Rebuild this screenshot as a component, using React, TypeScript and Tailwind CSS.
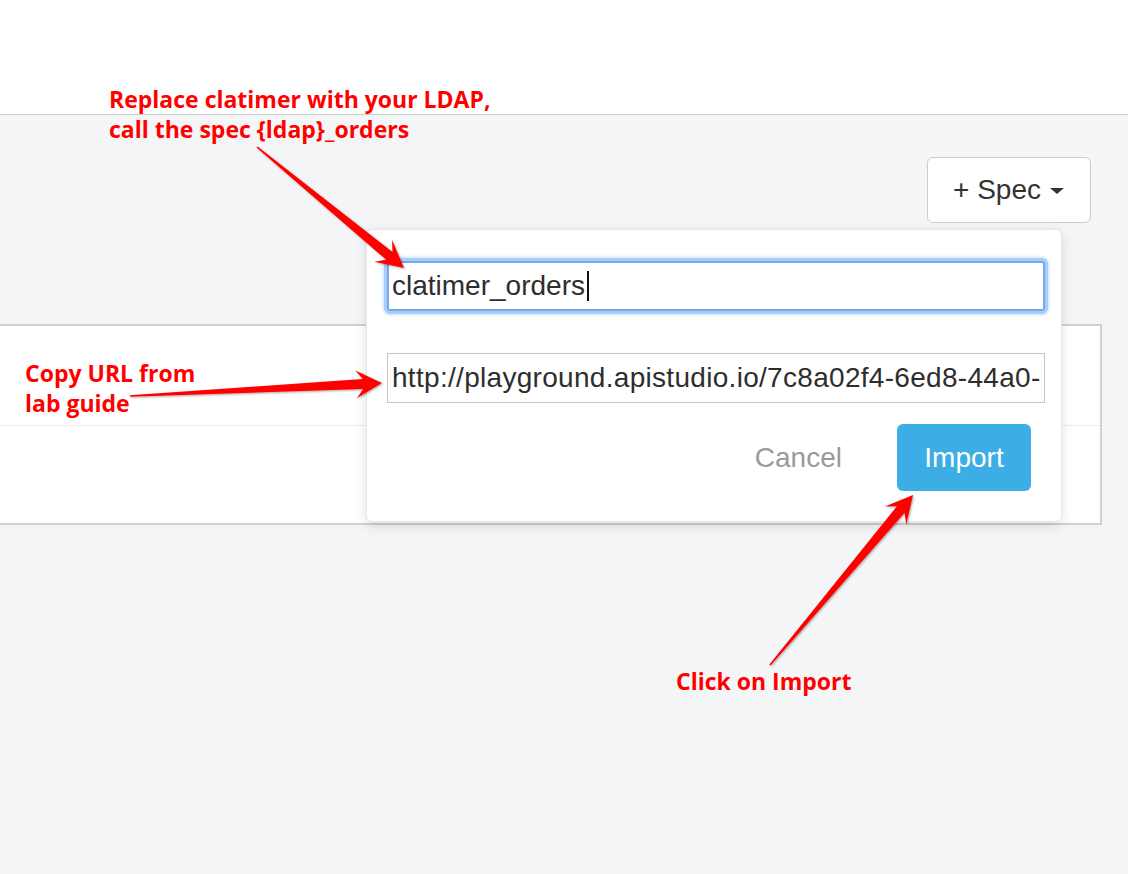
import React from "react";

type Pt = [number, number];

function arrowPoints(
  tail: Pt,
  tip: Pt,
  headLen = 26,
  headHalf = 14,
  shaftHalf = 5,
  tailHalf = 0.8,
  barb = 7
): string {
  const [tx, ty] = tail;
  const [hx, hy] = tip;
  const dx = hx - tx;
  const dy = hy - ty;
  const L = Math.sqrt(dx * dx + dy * dy);
  const ux = dx / L;
  const uy = dy / L;
  const nx = -uy;
  const ny = ux;
  const P = (t: number, s: number) =>
    `${(tx + ux * t + nx * s).toFixed(1)},${(ty + uy * t + ny * s).toFixed(1)}`;
  return [
    P(0, tailHalf),
    P(L - headLen + barb, shaftHalf),
    P(L - headLen, headHalf),
    P(L, 0),
    P(L - headLen, -headHalf),
    P(L - headLen + barb, -shaftHalf),
    P(0, -tailHalf),
  ].join(" ");
}

function Arrows() {
  return (
    <svg
      className="absolute inset-0 pointer-events-none"
      width={1128}
      height={874}
      viewBox="0 0 1128 874"
    >
      <defs>
        <filter id="ash" x="-10%" y="-10%" width="120%" height="120%">
          <feDropShadow dx="1" dy="1" stdDeviation="0.8" floodColor="#000" floodOpacity="0.35" />
        </filter>
      </defs>
      <g fill="#ff0000" filter="url(#ash)">
        <polygon points={arrowPoints([257, 147], [404, 268], 27, 14, 5, 0.8, 8)} />
        <polygon points={arrowPoints([130, 396], [382, 383], 26, 14, 5, 0.8, 7)} />
        <polygon points={arrowPoints([770, 665], [913, 495], 27, 14, 5, 0.8, 8)} />
      </g>
    </svg>
  );
}

export default function App() {
  const ui = "font-['Liberation_Sans',Arial,sans-serif]";
  const note =
    "absolute font-['Open_Sans','Noto_Sans',sans-serif] font-bold text-[23px] leading-[30px] text-[#ff0000] whitespace-nowrap";
  return (
    <div className={`relative w-[1128px] h-[874px] overflow-hidden bg-[#f4f5f7] ${ui}`}>
      {/* header */}
      <div className="h-[115px] bg-white border-b border-[#cbcbcb]" />

      {/* main */}
      <div className="flex flex-col pt-[42px]">
        <div className="flex justify-end pr-[37px]">
          <button className="flex items-center h-[66px] w-[164px] pl-[25px] bg-white border-[1.5px] border-[#cccccc] rounded-[6px] text-[28px] text-[#333333]">
            <span>+ Spec</span>
            <span className="ml-[9px] mt-[2px] w-0 h-0 border-t-[6px] border-t-[#333333] border-x-[7px] border-x-transparent" />
          </button>
        </div>

        <div className="mt-[101px] -ml-[10px] mr-[26px] h-[201px] bg-white border-2 border-[#d0d0d0] flex flex-col">
          <div className="h-[100px] border-b border-[#ececec]" />
          <div className="flex-1" />
        </div>
      </div>

      {/* popover */}
      <div className="absolute left-[366px] top-[229px] w-[696px] h-[293px] bg-white rounded-[6px] border border-[#e6e6e6] shadow-[0_4px_12px_rgba(0,0,0,0.12)] pt-[31px] pl-[20px] pr-[16px] flex flex-col">
        <div className="h-[50px] w-[658px] border-2 border-[#74a8ef] rounded-[3px] shadow-[0_0_0_3px_#aacdf8,0_0_3px_4px_rgba(150,195,250,0.5)] flex items-center pl-[3px] text-[28px] text-[#2e2e2e]">
          <span>clatimer_orders</span>
          <span className="ml-[2px] w-[2px] h-[30px] bg-[#111111]" />
        </div>
        <div className="mt-[42px] h-[50px] w-[658px] border border-[#c6c6c6] flex items-center pl-[4px] text-[28px] tracking-[0.3px] text-[#2e2e2e] overflow-hidden whitespace-nowrap">
          http://playground.apistudio.io/7c8a02f4-6ed8-44a0-
        </div>
        <div className="mt-[21px] flex items-center justify-end pr-[14px]">
          <span className="text-[28px] text-[#9a9a9a] mr-[55px]">Cancel</span>
          <button className="h-[67px] w-[134px] rounded-[6px] bg-[#3caee5] text-white text-[28px] flex items-center justify-center">
            Import
          </button>
        </div>
      </div>

      {/* annotations */}
      <div className={`${note} left-[109px] top-[84px]`}>
        Replace clatimer with your LDAP,
        <br />
        call the spec {"{ldap}"}_orders
      </div>
      <div className={`${note} left-[25px] top-[358px]`}>
        Copy URL from
        <br />
        lab guide
      </div>
      <div className={`${note} left-[676px] top-[666px]`}>Click on Import</div>

      <Arrows />
    </div>
  );
}
